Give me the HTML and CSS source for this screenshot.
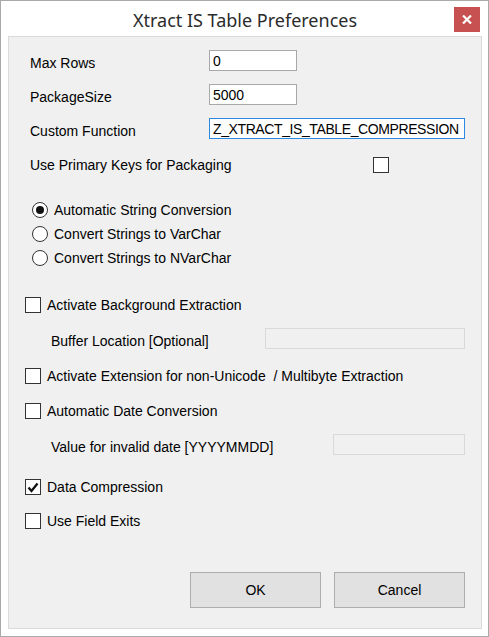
FILE: index.html
```html
<!DOCTYPE html>
<html>
<head>
<meta charset="utf-8">
<link rel="stylesheet" href="styles.css">
</head>
<body>
<div class="window">
  <div class="titlebar">
    <div class="title">Xtract IS Table Preferences</div>
    <div class="close"><svg width="10" height="9" viewBox="0 0 10 9"><path d="M1 0.5 L9 8.5 M9 0.5 L1 8.5" stroke="#fff" stroke-width="2.2"/></svg></div>
  </div>
  <div class="client">
    <div class="row field r1"><span class="lbl">Max Rows</span><span class="input narrow">0</span></div>
    <div class="row field r2"><span class="lbl">PackageSize</span><span class="input narrow">5000</span></div>
    <div class="row field r3"><span class="lbl">Custom Function</span><span class="input wide focused">Z_XTRACT_IS_TABLE_COMPRESSION</span></div>
    <div class="row pk"><span class="pklbl">Use Primary Keys for Packaging</span><span class="box"></span></div>

    <div class="radios">
      <div class="row radio"><span class="circle on"></span><span>Automatic String Conversion</span></div>
      <div class="row radio"><span class="circle"></span><span>Convert Strings to VarChar</span></div>
      <div class="row radio"><span class="circle"></span><span>Convert Strings to NVarChar</span></div>
    </div>

    <div class="row check c1"><span class="box"></span><span>Activate Background Extraction</span></div>
    <div class="row sub s1"><span class="lbl sublbl buf">Buffer Location [Optional]</span><span class="input disabled dis1"></span></div>
    <div class="row check c2"><span class="box"></span><span>Activate Extension for non-Unicode&nbsp; / Multibyte Extraction</span></div>
    <div class="row check c3"><span class="box"></span><span>Automatic Date Conversion</span></div>
    <div class="row sub s2"><span class="lbl sublbl dat">Value for invalid date [YYYYMMDD]</span><span class="input disabled dis2"></span></div>
    <div class="row check c4"><span class="box checked"><svg width="12" height="11" viewBox="0 0 12 11"><path d="M1.5 5.5 L4.5 9 L10.5 1.5" fill="none" stroke="#111" stroke-width="2.3"/></svg></span><span>Data Compression</span></div>
    <div class="row check c5"><span class="box"></span><span>Use Field Exits</span></div>

    <div class="buttons">
      <div class="btn">OK</div>
      <div class="btn">Cancel</div>
    </div>
  </div>
</div>
</body>
</html>
```
FILE: styles.css
```css
* { box-sizing: border-box; }
html, body { margin: 0; padding: 0; background: #fff; }
body { font-family: "Liberation Sans", Arial, sans-serif; font-size: 14px; color: #000; }

.window {
  width: 489px;
  height: 637px;
  border: 1px solid #a9a9a9;
  background: #fff;
  display: flex;
  flex-direction: column;
}

.titlebar {
  height: 35px;
  position: relative;
  display: flex;
  justify-content: center;
  align-items: center;
  flex-shrink: 0;
}
.title {
  font-family: "Noto Sans", "Open Sans", sans-serif;
  font-size: 18px;
  color: #2b2b2b;
  margin-top: 2px;
  margin-left: 1px;
}
.close {
  position: absolute;
  left: 453px;
  top: 6px;
  width: 26px;
  height: 25px;
  background: #c75050;
  display: flex;
  align-items: center;
  justify-content: center;
}

.client {
  margin: 0 6px 7px 7px;
  flex: 1;
  background: #f0f0f0;
  border: 1px solid #dadada;
  padding-top: 13px;
  position: relative;
}

.row { display: flex; align-items: center; }

.field { height: 21px; padding-left: 21px; }
.r1 { margin-bottom: 13px; }
.r2 { margin-bottom: 13px; }
.r3 { margin-bottom: 0; }
.lbl { width: 179px; padding-top: 4px; }

.input {
  height: 21px;
  background: #fff;
  border: 1px solid #a8a8a8;
  padding: 1px 3px 0;
  display: flex;
  align-items: center;
  font-size: 14px;
  white-space: nowrap;
  overflow: hidden;
}
.narrow { width: 88px; }
.wide { width: 256px; }
.focused { border-color: #2a8ae2; letter-spacing: -0.4px; }
.disabled { background: #f0f0f0; border-color: #d9d9d9; }
.dis1 { width: 200px; }
.dis2 { width: 132px; }

.pk { height: 16px; margin-top: 18px; padding-left: 21px; }
.pklbl { width: 343px; }

.box {
  width: 16px;
  height: 16px;
  border: 1px solid #333;
  background: #fff;
  display: inline-flex;
  align-items: center;
  justify-content: center;
  flex-shrink: 0;
}

.radios { margin-top: 29px; padding-left: 23px; }
.radio { height: 16px; margin-bottom: 8px; }
.radio:last-child { margin-bottom: 0; }
.circle {
  width: 16px;
  height: 16px;
  border: 1px solid #333;
  border-radius: 50%;
  background: #fff;
  margin-right: 6px;
  display: inline-flex;
  align-items: center;
  justify-content: center;
  flex-shrink: 0;
}
.circle.on::after {
  content: "";
  width: 8px;
  height: 8px;
  border-radius: 50%;
  background: #111;
}

.check { height: 16px; padding-left: 16px; }
.check .box { margin-right: 6px; }
.c1 { margin-top: 31px; }
.c2 { margin-top: 19px; }
.c3 { margin-top: 19px; }
.c4 { margin-top: 24px; }
.c5 { margin-top: 18px; }

.sub { height: 21px; padding-left: 42px; }
.s1 { margin-top: 15px; }
.s2 { margin-top: 15px; }
.sublbl.buf { width: 214px; }
.sublbl.dat { width: 282px; }

.buttons {
  display: flex;
  gap: 13px;
  padding-left: 181px;
  margin-top: 43px;
}
.btn {
  width: 131px;
  height: 36px;
  background: #e1e1e1;
  border: 1px solid #adadad;
  display: flex;
  align-items: center;
  justify-content: center;
  font-size: 14px;
}
```
